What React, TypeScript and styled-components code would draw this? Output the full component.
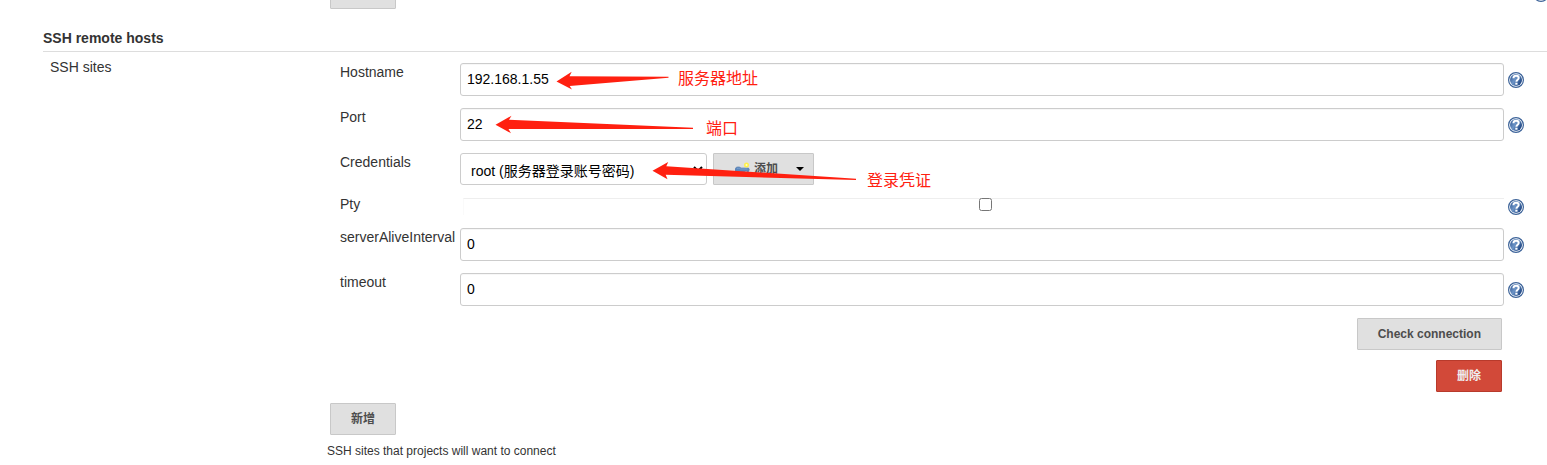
import React from "react";
import styled, { createGlobalStyle } from "styled-components";

const GlobalStyle = createGlobalStyle`
  * { box-sizing: border-box; }
  body {
    margin: 0;
    background: #fff;
    color: #333;
    font: 14px/18px "Liberation Sans", "Noto Sans CJK SC", sans-serif;
    overflow: hidden;
  }
`;

const Page = styled.main`
  position: relative;
`;

const PreviousSection = styled.div`
  display: flex;
  justify-content: space-between;
  align-items: flex-end;
  height: 9px;
  padding-left: 330px;
  margin-right: -2px;
  overflow: hidden;

  & > svg {
    margin-bottom: 7px;
  }
`;

const Button = styled.button<{ $danger?: boolean }>`
  display: inline-flex;
  align-items: center;
  justify-content: center;
  flex: none;
  height: 32px;
  min-width: 66px;
  padding: 0 20px;
  border: 1px solid ${(p) => (p.$danger ? "#b83a2b" : "#c8c8c8")};
  border-radius: 1px;
  background: ${(p) => (p.$danger ? "#d24939" : "#e0e0e0")};
  color: ${(p) => (p.$danger ? "#eee" : "#4d4d4d")};
  font: bold 12px/16px "Liberation Sans", "Noto Sans CJK SC", sans-serif;
`;

const SectionTitle = styled.h2`
  margin: 19px 0 0 43px;
  padding-bottom: 3px;
  border-bottom: 1px solid #ddd;
  font-size: 14px;
  line-height: 20px;
`;

const Section = styled.section`
  display: grid;
  grid-template-columns: 277px 1fr;
  padding-left: 50px;
`;

const SectionLabel = styled.div`
  padding-top: 6px;
`;

const Form = styled.form`
  display: flex;
  flex-direction: column;
  gap: 12px;
  padding: 11px 23px 0 13px;
`;

const Row = styled.div`
  display: grid;
  grid-template-columns: 120px 1fr 20px;
  align-items: center;

  & > svg {
    justify-self: end;
  }
`;

const Label = styled.label<{ $compact?: boolean }>`
  align-self: start;
  line-height: ${(p) => (p.$compact ? "14px" : "18px")};
`;

const TextInput = styled.input`
  width: 100%;
  height: 33px;
  padding: 0 6px 1px;
  border: 1px solid #ccc;
  border-radius: 3px;
  background: #fff;
  color: #000;
  font: inherit;
  box-shadow: inset 0 1px 1px #00000009;
`;

const Credentials = styled.div`
  display: flex;
  gap: 6px;
`;

const Select = styled.select`
  width: 247px;
  height: 32px;
  padding: 3px 0 0 6px;
  border: 1px solid #ccc;
  border-radius: 3px;
  background: #fff;
  color: #000;
  font: inherit;
`;

const AddButton = styled(Button)`
  justify-content: flex-start;
  width: 101px;
  padding: 0 9px 0 21px;
  gap: 3px;

  & > svg:last-child {
    margin-left: auto;
  }
`;

const CheckCell = styled.div`
  display: flex;
  justify-content: center;
  height: 17px;
  margin-left: 3px;
  padding-left: 2px;
  border-top: 1px solid #eee;
  border-left: 1px solid #fafafa;
`;

const Checkbox = styled.input`
  width: 13px;
  height: 13px;
  margin: -1px 0 0;
`;

const PtyRow = styled(Row)`
  height: 19px;
`;

const Actions = styled.div`
  display: flex;
  flex-direction: column;
  align-items: flex-end;
  gap: 10px;
  padding-right: 22px;
`;

const Footer = styled.div`
  padding: 11px 0 0 3px;
`;

const Description = styled.p`
  margin: 8px 0 0 -3px;
  font-size: 12px;
  line-height: 16px;
`;

const Arrows = styled.svg`
  position: absolute;
  top: 0;
  left: 0;
  pointer-events: none;
`;

const Note = styled.span<{ $x: number; $y: number }>`
  position: absolute;
  left: ${(p) => p.$x}px;
  top: ${(p) => p.$y}px;
  color: #ff2010;
  font-size: 16px;
  line-height: 20px;
  white-space: nowrap;
  pointer-events: none;
`;

const HelpIcon = () => (
  <svg width="16" height="16" viewBox="0 0 16 16" aria-hidden="true">
    <defs>
      <linearGradient id="helpFill" x1="0" y1="0" x2="1" y2="0.6">
        <stop offset="0" stopColor="#2a5290" />
        <stop offset="0.5" stopColor="#6d94c6" />
        <stop offset="1" stopColor="#1f4785" />
      </linearGradient>
    </defs>
    <circle cx="8" cy="8" r="7.4" fill="#fff" stroke="#3c6399" strokeWidth="1.2" />
    <circle cx="8" cy="8" r="6" fill="url(#helpFill)" />
    <path d="M5.400 6.200C5.500 4.500 6.700 3.800 8.100 3.800c1.500 0 2.600.8 2.600 2.200 0 1.700-2.300 1.800-2.300 3.700" fill="none" stroke="#fff" strokeWidth="2" />
    <rect x="7.300" y="10.700" width="2.200" height="2" fill="#fff" />
  </svg>
);

const KeyIcon = () => (
  <svg width="16" height="16" viewBox="0 0 16 16" aria-hidden="true">
    <path d="M0 8.500C0 6.900 1.400 5.900 3.200 5.900c1.400 0 2.200.4 2.800 1.100H13.500l.8 1.500-.8 2.200H12l-1-1-1.200 1H7c-.8 1.400-2 2-3.400 2C1.500 12.700 0 11 0 8.500Z" fill="#5b87bd" stroke="#5078aa" strokeWidth=".6" />
    <path d="M2 7.800c1-.8 2.600-.8 3.600.2H12.500" fill="none" stroke="#7ba0cf" />
    <circle cx="11.500" cy="4" r="2.500" fill="#fff04a" />
    <circle cx="11.500" cy="4" r="1" fill="#ffffc4" />
  </svg>
);

const Caret = () => (
  <svg width="8" height="4" viewBox="0 0 8 4" aria-hidden="true">
    <path d="M0 0h8L4 4Z" fill="#000" />
  </svg>
);

function TextField({ id, label, value }: { id: string; label: string; value: string }) {
  return (
    <Row>
      <Label htmlFor={id}>{label}</Label>
      <TextInput id={id} type="text" defaultValue={value} />
      <HelpIcon />
    </Row>
  );
}

export default function App() {
  return (
    <>
      <GlobalStyle />
      <Page>
        <PreviousSection>
          <Button type="button" />
          <HelpIcon />
        </PreviousSection>
        <SectionTitle>SSH remote hosts</SectionTitle>
        <Section>
          <SectionLabel>SSH sites</SectionLabel>
          <div>
            <Form onSubmit={(e) => e.preventDefault()}>
              <TextField id="hostname" label="Hostname" value="192.168.1.55" />
              <TextField id="port" label="Port" value="22" />
              <Row>
                <Label htmlFor="credentials">Credentials</Label>
                <Credentials>
                  <Select id="credentials">
                    <option>root (服务器登录账号密码)</option>
                  </Select>
                  <AddButton type="button">
                    <KeyIcon />
                    添加
                    <Caret />
                  </AddButton>
                </Credentials>
              </Row>
              <PtyRow>
                <Label htmlFor="pty" $compact>Pty</Label>
                <CheckCell>
                  <Checkbox id="pty" type="checkbox" />
                </CheckCell>
                <HelpIcon />
              </PtyRow>
              <TextField id="interval" label="serverAliveInterval" value="0" />
              <TextField id="timeout" label="timeout" value="0" />
              <Actions>
                <Button type="button">Check connection</Button>
                <Button type="button" $danger>删除</Button>
              </Actions>
            </Form>
            <Footer>
              <Button type="button">新增</Button>
              <Description>SSH sites that projects will want to connect</Description>
            </Footer>
          </div>
        </Section>
        <Arrows width="940" height="200" viewBox="0 0 940 200" fill="#ff2010" aria-hidden="true">
          <path d="M556.500 81.500 571.700 71.700 569.500 76.300 668.500 76.700V77.800L569.700 86 572 89.500Z" />
          <path d="M495.500 124.700 511.500 115.700 509 119.700 693 127.700V129L508.500 129 511 133.200Z" />
          <path d="M652.500 170.700 668.200 162 666.300 166.300 856 178.700V180L665.700 174.700 667.500 179.200Z" />
        </Arrows>
        <Note $x={678} $y={69}>服务器地址</Note>
        <Note $x={706} $y={119}>端口</Note>
        <Note $x={867} $y={171}>登录凭证</Note>
      </Page>
    </>
  );
}
